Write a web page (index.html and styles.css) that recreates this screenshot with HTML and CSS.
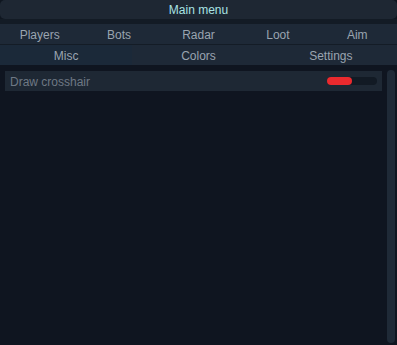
FILE: index.html
```html
<!DOCTYPE html>
<html>
<head>
<meta charset="utf-8">
<link rel="stylesheet" href="styles.css">
</head>
<body>
<div class="window">
  <div class="title">Main menu</div>
  <div class="gap"></div>
  <div class="tabs tabs5">
    <div class="tab">Players</div>
    <div class="tab">Bots</div>
    <div class="tab">Radar</div>
    <div class="tab">Loot</div>
    <div class="tab">Aim</div>
  </div>
  <div class="tabs tabs3">
    <div class="tab active">Misc</div>
    <div class="tab">Colors</div>
    <div class="tab">Settings</div>
  </div>
  <div class="content">
    <div class="list">
      <div class="item">
        <span class="label">Draw crosshair</span>
        <div class="toggle"><div class="fill" style="width:25px"></div></div>
      </div>
    </div>
    <div class="scrollbar"></div>
  </div>
</div>
</body>
</html>
```
FILE: styles.css
```css
html, body {
  margin: 0;
  padding: 0;
  background: #0f1620;
}
body {
  width: 397px;
  height: 345px;
  overflow: hidden;
  font-family: "Liberation Sans", Arial, sans-serif;
  font-size: 12px;
}
.window {
  display: flex;
  flex-direction: column;
  height: 345px;
}
.title {
  height: 19px;
  line-height: 19px;
  padding-top: 1px;
  box-sizing: border-box;
  background: #1e2733;
  border-radius: 5px;
  color: #a9e3e3;
  text-align: center;
}
.gap {
  height: 5px;
  background: #131b25;
}
.tabs {
  display: grid;
  height: 20px;
  background: #1e2937;
}
.tabs5 {
  grid-template-columns: repeat(5, 1fr);
  border-bottom: 1px solid #141c26;
}
.tabs3 {
  grid-template-columns: repeat(3, 1fr);
}
.tab {
  line-height: 20px;
  padding-top: 1px;
  text-align: center;
  color: #9aa4b0;
}
.tab.active {
  background: #1b2939;
}
.content {
  flex: 1;
  display: flex;
  padding: 6px 2px 2px 5px;
  gap: 5px;
  background: #0f1520;
}
.list {
  flex: 1;
}
.item {
  height: 20px;
  background: #1e2834;
  display: flex;
  align-items: center;
  justify-content: space-between;
  padding: 0 5px 0 5px;
}
.label {
  color: #6e7884;
  padding-top: 1px;
}
.toggle {
  width: 50px;
  height: 8px;
  border-radius: 4px;
  background: #121a24;
  display: flex;
}
.fill {
  height: 8px;
  border-radius: 4px;
  background: #ea2a2e;
}
.scrollbar {
  width: 8px;
  margin-top: -1px;
  background: #1f2a37;
  border-radius: 4px;
}
```
